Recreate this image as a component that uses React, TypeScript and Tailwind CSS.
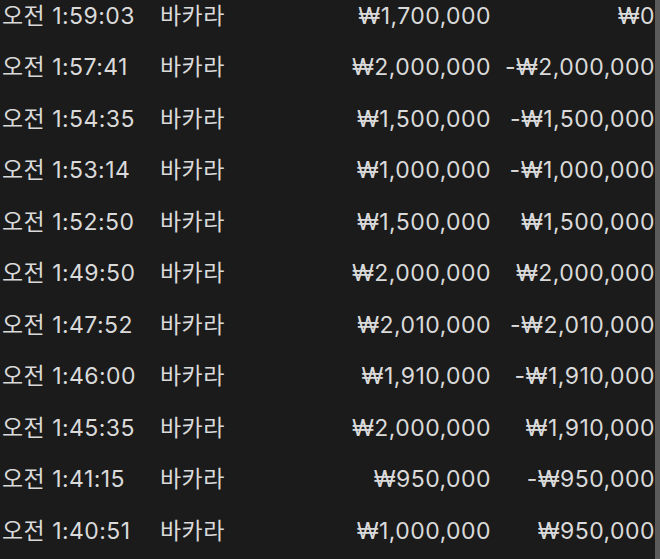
const rows = [
    { time: '오전 1:59:03', game: '바카라', bet: '₩1,700,000', result: '₩0' },
    { time: '오전 1:57:41', game: '바카라', bet: '₩2,000,000', result: '-₩2,000,000' },
    { time: '오전 1:54:35', game: '바카라', bet: '₩1,500,000', result: '-₩1,500,000' },
    { time: '오전 1:53:14', game: '바카라', bet: '₩1,000,000', result: '-₩1,000,000' },
    { time: '오전 1:52:50', game: '바카라', bet: '₩1,500,000', result: '₩1,500,000' },
    { time: '오전 1:49:50', game: '바카라', bet: '₩2,000,000', result: '₩2,000,000' },
    { time: '오전 1:47:52', game: '바카라', bet: '₩2,010,000', result: '-₩2,010,000' },
    { time: '오전 1:46:00', game: '바카라', bet: '₩1,910,000', result: '-₩1,910,000' },
    { time: '오전 1:45:35', game: '바카라', bet: '₩2,000,000', result: '₩1,910,000' },
    { time: '오전 1:41:15', game: '바카라', bet: '₩950,000', result: '-₩950,000' },
    { time: '오전 1:40:51', game: '바카라', bet: '₩1,000,000', result: '₩950,000' },
];

export default function App() {
    return (
        <div className="flex h-[559px] w-[660px] overflow-hidden bg-[#1b1b1b]">
            <div className="w-[655px] overflow-hidden">
                <div
                    className="-mt-[10px] text-[23px] tracking-[0.45px] text-[#dadada]"
                    style={{ fontFamily: 'Inter, "Noto Sans CJK KR", sans-serif' }}
                >
                    {rows.map((r, i) => (
                        <div key={i} className="grid h-[51.5px] grid-cols-[160px_120px_211px_164px] items-center">
                            <span className="pl-[2px] whitespace-nowrap">{r.time}</span>
                            <span className="whitespace-nowrap">{r.game}</span>
                            <span className="text-right whitespace-nowrap">{r.bet}</span>
                            <span className="text-right whitespace-nowrap">{r.result}</span>
                        </div>
                    ))}
                </div>
            </div>
            <div className="w-[5px] bg-[#5b5b5b]" />
        </div>
    );
}
